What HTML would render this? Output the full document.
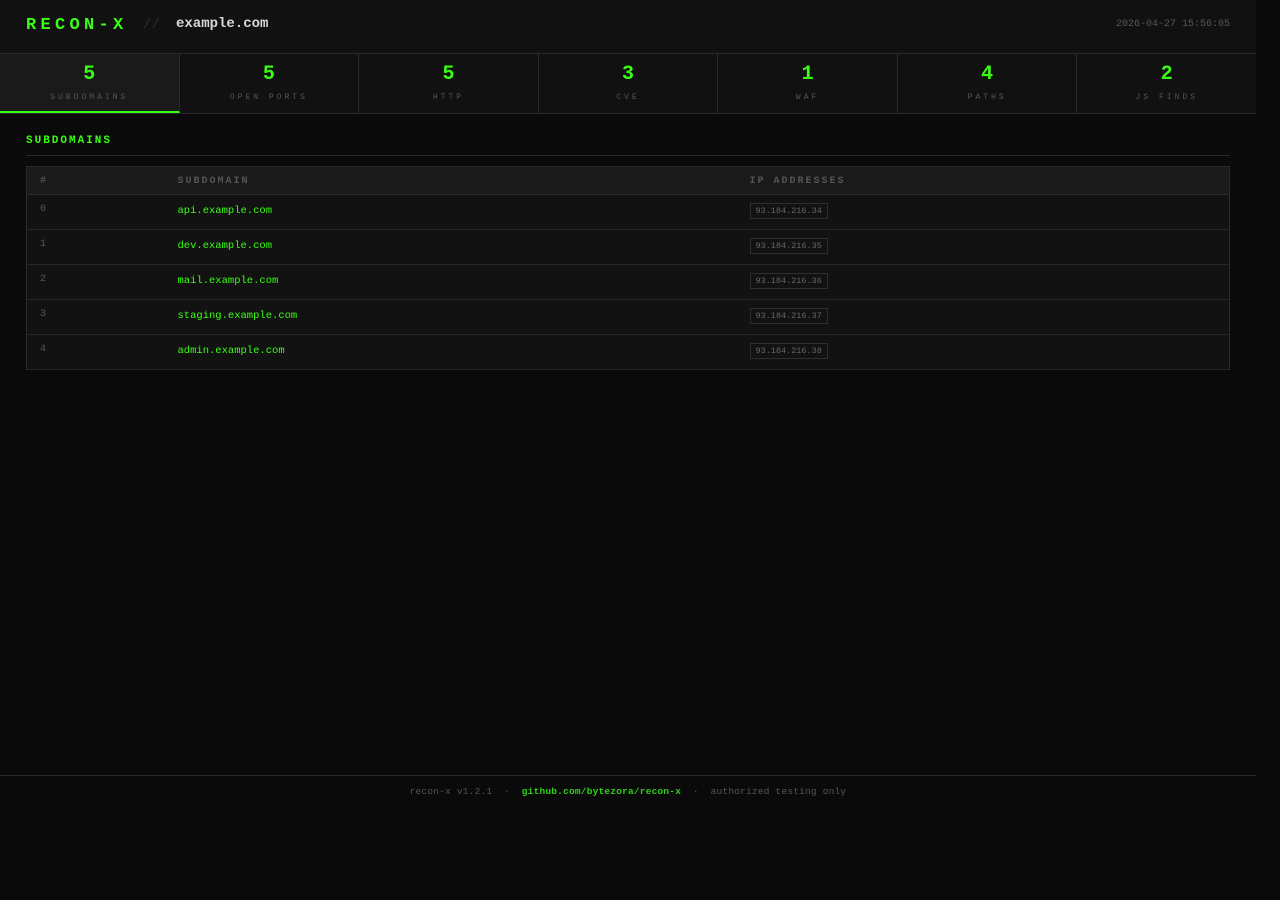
<!DOCTYPE html>
<html><head><meta charset="utf-8"><style>
*{margin:0;padding:0;box-sizing:border-box}
html,body{width:1280px;height:900px;background:#0a0a0a;overflow:hidden}
body{font-family:"Liberation Mono","DejaVu Sans Mono",monospace;color:#666}
#wrap{width:1256px;height:900px;position:relative}
header{height:54px;background:#111;border-bottom:1px solid #2a2a2a;position:relative}
.logo{position:absolute;left:26px;top:16px;font-size:17px;font-weight:bold;color:#39ff14;letter-spacing:4.3px}
.sl{position:absolute;left:143px;top:17px;font-size:14px;color:#2e2e2e}
.dom{position:absolute;left:176px;top:16px;font-size:14px;font-weight:bold;color:#d8d8d8}
.ts{position:absolute;right:26px;top:19px;font-size:10px;color:#555}
.stats{display:flex;height:60px;background:#111;border-bottom:1px solid #2a2a2a}
.st{flex:1;border-right:1px solid #2a2a2a;text-align:center;position:relative}
.st:last-child{border-right:none}
.st.a{background:#1a1a1a;border-bottom:2px solid #39ff14}
.st b{display:block;font-size:20px;color:#39ff14;margin-top:10px;line-height:22px}
.st span{display:block;font-size:8px;letter-spacing:3px;color:#555;margin-top:7px}
h2{position:absolute;left:26px;top:135px;font-size:11px;color:#39ff14;letter-spacing:2px;font-weight:bold}
.rule{position:absolute;left:26px;top:155px;width:1204px;height:1px;background:#2a2a2a}
table{position:absolute;left:26px;top:166px;width:1204px;border-collapse:collapse;border:1px solid #2a2a2a;background:#121212}
th{height:28px;background:#1a1a1a;text-align:left;font-size:10px;letter-spacing:2px;color:#555;font-weight:bold;border-bottom:1px solid #2a2a2a;padding-top:1px}
td{height:35px;border-bottom:1px solid #262626;vertical-align:top;font-size:10px}
th:first-child,td:first-child{padding-left:13px;width:151px}
td:first-child{padding-top:9px;color:#555}
td.s{color:#39ff14;padding-top:10px;font-size:10.5px;width:572px}
td.ip{padding-top:8px}
.ip span{display:inline-block;border:1px solid #2e2e2e;padding:2px 5px;font-size:8.5px;color:#666}
footer{position:absolute;left:0;top:775px;width:1256px;border-top:1px solid #2a2a2a;text-align:center;font-size:9.5px;color:#555;padding-top:10px;letter-spacing:.2px}
footer a{color:#2fcf1a;font-weight:bold;text-decoration:none}
</style></head><body><div id="wrap">
<header><div class="logo">RECON-X</div><div class="sl">//</div><div class="dom">example.com</div><div class="ts">2026-04-27 15:56:05</div></header>
<div class="stats">
<div class="st a"><b>5</b><span>SUBDOMAINS</span></div>
<div class="st"><b>5</b><span>OPEN PORTS</span></div>
<div class="st"><b>5</b><span>HTTP</span></div>
<div class="st"><b>3</b><span>CVE</span></div>
<div class="st"><b>1</b><span>WAF</span></div>
<div class="st"><b>4</b><span>PATHS</span></div>
<div class="st"><b>2</b><span>JS FINDS</span></div>
</div>
<h2>SUBDOMAINS</h2><div class="rule"></div>
<table>
<tr><th>#</th><th>SUBDOMAIN</th><th>IP ADDRESSES</th></tr>
<tr><td>0</td><td class="s">api.example.com</td><td class="ip"><span>93.184.216.34</span></td></tr>
<tr><td>1</td><td class="s">dev.example.com</td><td class="ip"><span>93.184.216.35</span></td></tr>
<tr><td>2</td><td class="s">mail.example.com</td><td class="ip"><span>93.184.216.36</span></td></tr>
<tr><td>3</td><td class="s">staging.example.com</td><td class="ip"><span>93.184.216.37</span></td></tr>
<tr><td>4</td><td class="s">admin.example.com</td><td class="ip"><span>93.184.216.38</span></td></tr>
</table>
<footer>recon-x v1.2.1 &nbsp;·&nbsp; <a>github.com/bytezora/recon-x</a> &nbsp;·&nbsp; authorized testing only</footer>
</div></body></html>
